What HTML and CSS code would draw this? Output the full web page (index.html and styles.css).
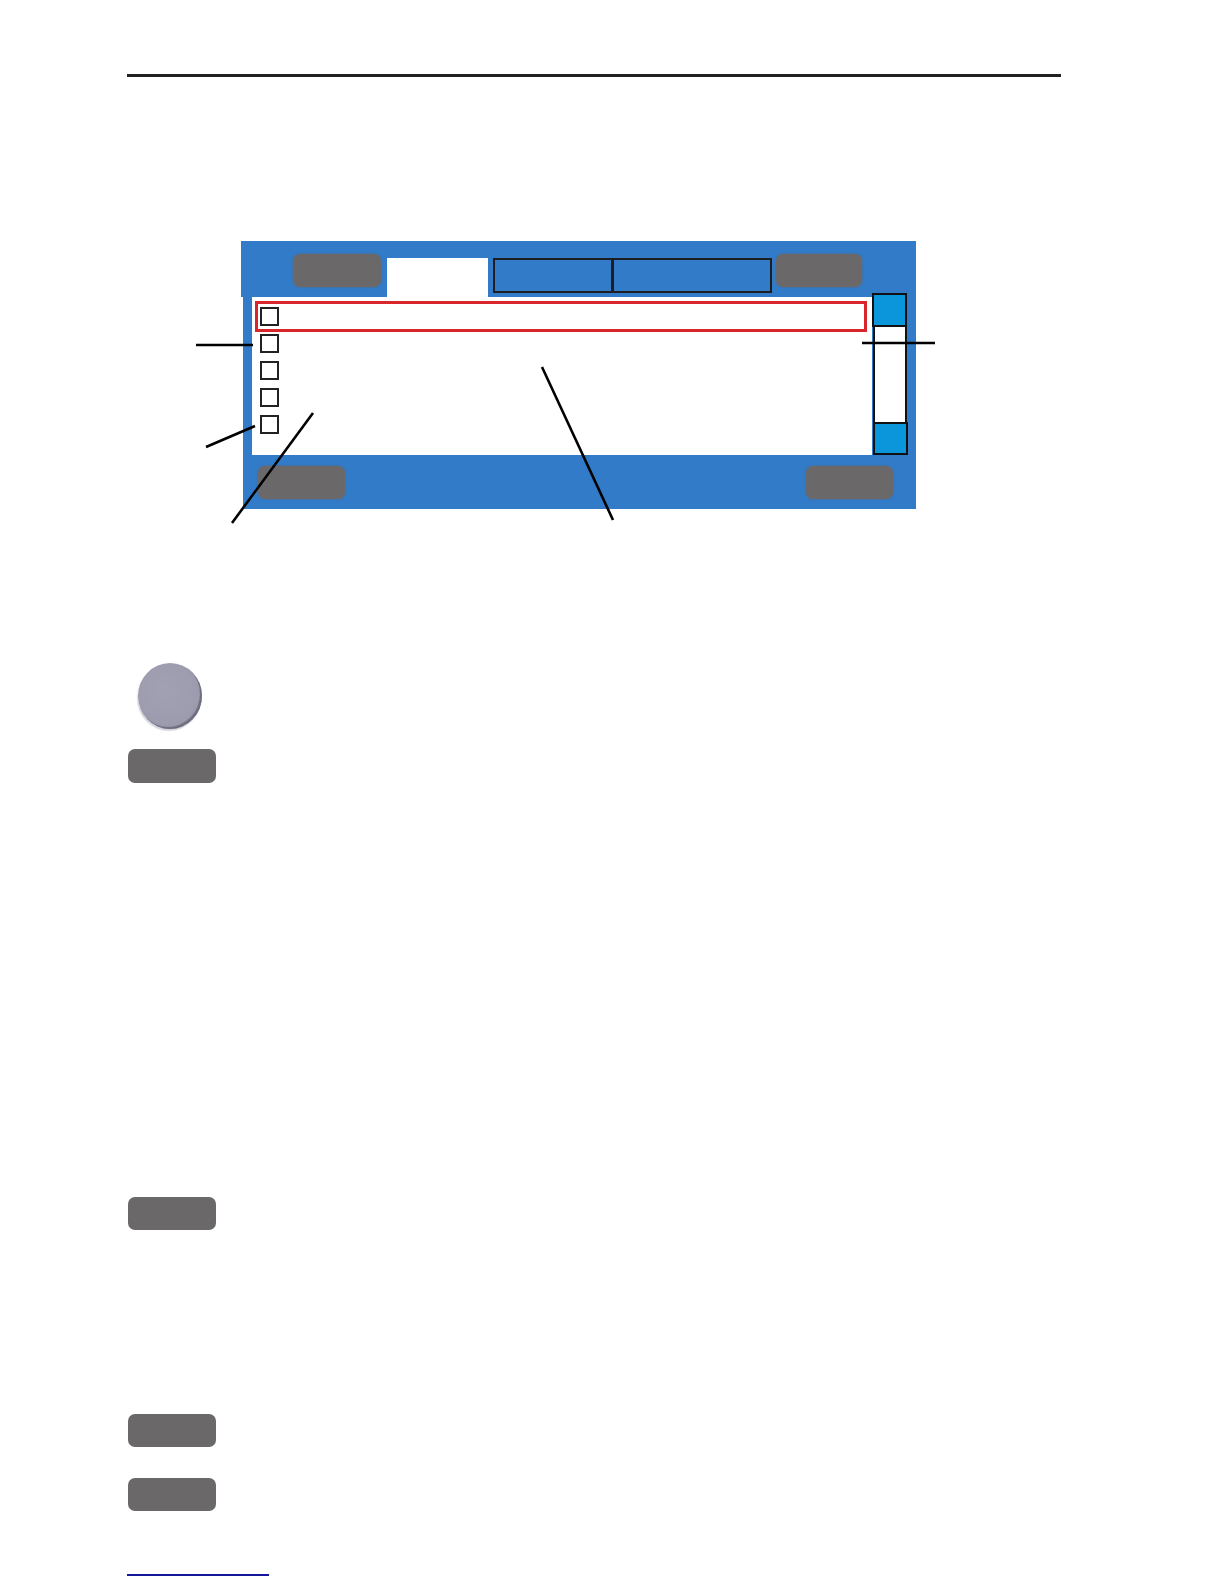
FILE: index.html
```html
<!DOCTYPE html>
<html lang="en">
<head>
<meta charset="utf-8">
<title>Screen layout</title>
<link rel="stylesheet" href="styles.css">
</head>
<body>
<div class="page">
  <div class="rule"></div>

  <div class="figure">
    <div class="panel">
      <div class="panel-head">
        <div class="softkey head-left"></div>
        <div class="tab-active"></div>
        <div class="tabs">
          <div class="tab-cell first"></div>
          <div class="tab-cell"></div>
        </div>
        <div class="softkey head-right"></div>
      </div>
      <div class="panel-body">
        <div class="list">
          <div class="row-selected"><span class="check"></span></div>
          <div class="rows">
            <span class="check"></span>
            <span class="check"></span>
            <span class="check"></span>
            <span class="check"></span>
          </div>
        </div>
        <div class="scroll">
          <div class="scroll-up"></div>
          <div class="scroll-track"></div>
          <div class="scroll-down"></div>
        </div>
      </div>
      <div class="panel-foot">
        <div class="softkey"></div>
        <div class="softkey"></div>
      </div>
    </div>
    <svg class="callouts" width="1224" height="300" viewBox="0 0 1224 300">
      <line x1="196" y1="104" x2="253" y2="104"/>
      <line x1="206" y1="206" x2="255" y2="185"/>
      <line x1="313" y1="172" x2="232" y2="282"/>
      <line x1="542" y1="126" x2="613" y2="279"/>
      <line x1="862" y1="102" x2="935" y2="102"/>
    </svg>
  </div>

  <div class="knob"></div>
  <div class="key key-1"></div>
  <div class="key key-2"></div>
  <div class="key key-3"></div>
  <div class="key key-4"></div>
  <div class="link-line"></div>
</div>
</body>
</html>
```

FILE: styles.css
```css
html, body {
  margin: 0;
  padding: 0;
  background: #ffffff;
  font-family: "Liberation Sans", Arial, sans-serif;
}

.page {
  width: 1224px;
  height: 1584px;
  padding-top: 74px;
  box-sizing: border-box;
  overflow: hidden;
}

.rule {
  margin-left: 127px;
  width: 934px;
  height: 3px;
  background: #222222;
}

.figure {
  position: relative;
  margin-top: 164px;
  width: 1224px;
}

.panel {
  margin-left: 243px;
  width: 673px;
  height: 268px;
  background: #317bc8;
  display: flex;
  flex-direction: column;
}

.panel-head {
  margin-left: -2px;
  height: 56px;
  background: #317bc8;
  display: flex;
  align-items: flex-start;
  padding-top: 13px;
  box-sizing: border-box;
}

.softkey {
  width: 87px;
  height: 33px;
  border-radius: 7px;
  background: #6b6869;
  box-shadow: 0 0 1px 1px rgba(107, 104, 105, 0.35);
}

.head-left {
  margin-left: 52px;
  width: 88px;
}

.tab-active {
  margin-left: 6px;
  margin-top: 4px;
  width: 101px;
  height: 39px;
  background: #ffffff;
}

.tabs {
  margin-left: 5px;
  margin-top: 4px;
  width: 279px;
  height: 35px;
  border: 2px solid #1e1e22;
  box-sizing: border-box;
  display: flex;
}

.tab-cell {
  flex: 1;
}

.tab-cell.first {
  flex: 0 0 116px;
  border-right: 3px solid #1e1e22;
}

.head-right {
  margin-left: 4px;
  width: 86px;
}

.panel-body {
  height: 158px;
  display: flex;
  align-items: flex-start;
}

.list {
  margin-left: 9px;
  width: 620px;
  height: 158px;
  background: #ffffff;
  padding: 4px 0 0 3px;
  box-sizing: border-box;
  display: flex;
  flex-direction: column;
}

.row-selected {
  width: 612px;
  height: 31px;
  border: 3px solid #d8262c;
  box-sizing: border-box;
  padding: 3px 0 0 2px;
}

.rows {
  margin-top: 2px;
  margin-left: 5px;
  display: flex;
  flex-direction: column;
  gap: 8px;
}

.check {
  display: block;
  width: 19px;
  height: 19px;
  border: 2px solid #222222;
  box-sizing: border-box;
  background: #ffffff;
}

.scroll {
  margin-top: -4px;
  width: 35px;
  height: 162px;
  display: flex;
  flex-direction: column;
}

.scroll-up {
  height: 34px;
  background: #0b95da;
  border: 2px solid #111111;
  box-sizing: border-box;
}

.scroll-track {
  flex: 1;
  background: #ffffff;
  border-left: 2px solid #111111;
  border-right: 2px solid #111111;
  margin-left: 1px;
  width: 34px;
  box-sizing: border-box;
}

.scroll-down {
  height: 33px;
  width: 35px;
  margin-left: 1px;
  background: #0b95da;
  border: 2px solid #111111;
  box-sizing: border-box;
}

.panel-foot {
  height: 54px;
  display: flex;
  justify-content: space-between;
  align-items: flex-start;
  padding: 11px 23px 0 15px;
  box-sizing: border-box;
}

.callouts {
  position: absolute;
  left: 0;
  top: 0;
  overflow: visible;
  pointer-events: none;
}

.callouts line {
  stroke: #000000;
  stroke-width: 2.6;
}

.knob {
  margin-top: 154px;
  margin-left: 138px;
  width: 64px;
  height: 66px;
  border-radius: 50%;
  background: radial-gradient(circle at 42% 40%, #a2a1b3 0%, #9d9caf 60%, #9695a8 100%);
  box-shadow: inset -2px -2px 1px #6f6e80, -1px 2px 1px #d6d6de;
}

.key {
  margin-left: 128px;
  width: 88px;
  height: 33px;
  border-radius: 7px;
  background: #6b6869;
}

.key-1 {
  margin-top: 20px;
  height: 34px;
}

.key-2 {
  margin-top: 414px;
}

.key-3 {
  margin-top: 184px;
}

.key-4 {
  margin-top: 31px;
}

.link-line {
  margin-top: 63px;
  margin-left: 127px;
  width: 142px;
  height: 2px;
  background: #16169a;
}
```
